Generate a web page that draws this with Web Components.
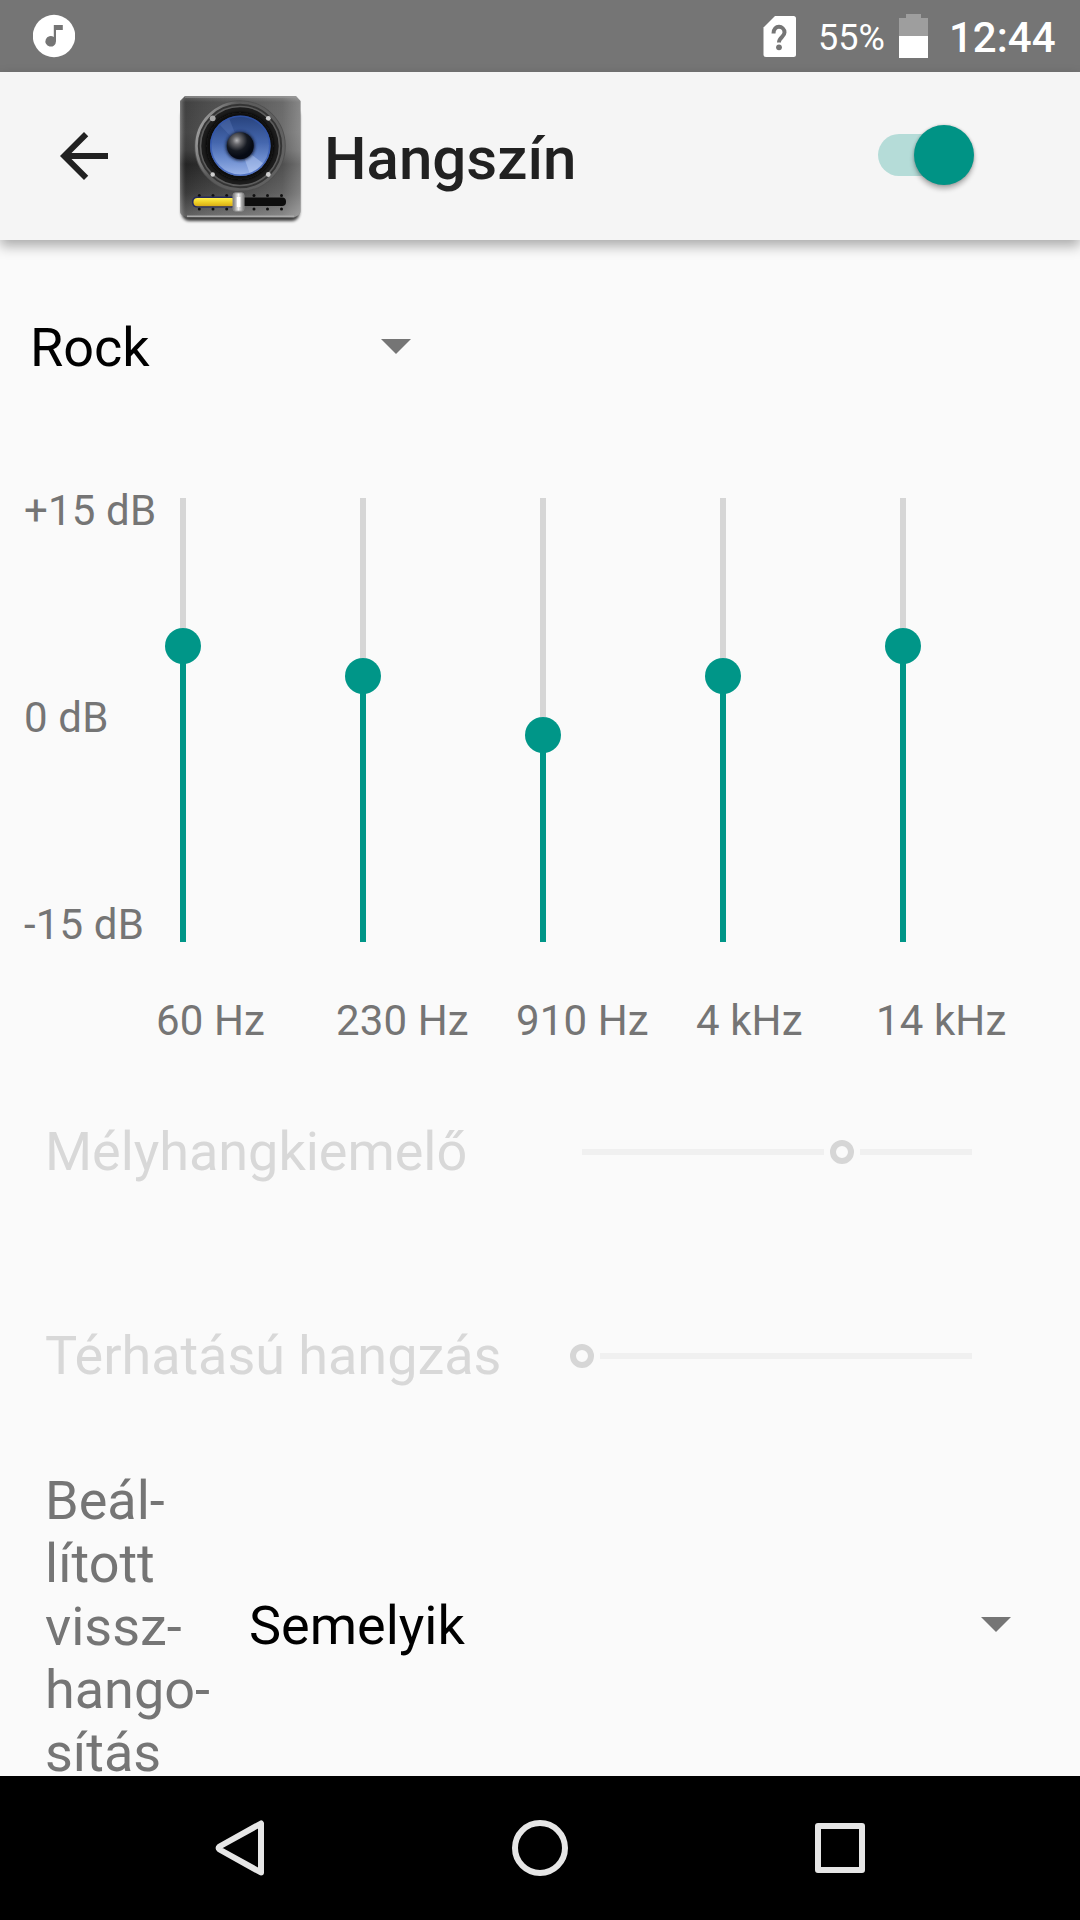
<!DOCTYPE html>
<html lang="hu">
<head>
<meta charset="utf-8">
<title>Hangszín</title>
<style>
  html, body { margin: 0; padding: 0; }
  body { width: 1080px; height: 1920px; overflow: hidden; background: #fafafa; font-family: Roboto, "Noto Sans", sans-serif; }
</style>
</head>
<body>
<eq-screen></eq-screen>

<script>
function define(name, html, setup) {
  const template = document.createElement('template');
  template.innerHTML = html;
  customElements.define(name, class extends HTMLElement {
    constructor() {
      super();
      this.attachShadow({ mode: 'open' }).appendChild(template.content.cloneNode(true));
    }
    connectedCallback() { if (setup) setup(this, this.shadowRoot); }
  });
}

define('status-bar', `
<style>
  :host { display: flex; align-items: flex-start; height: 72px; background: #757575; color: #fff; box-sizing: border-box; padding-left: 33px; padding-right: 24px; }
  svg { display: block; flex: none; }
  .space { flex: 1; }
  .pct { font-size: 36px; line-height: 42px; margin: 17px 14px 0 21px; width: 67px; }
  .time { font-size: 42px; line-height: 49px; font-weight: 500; margin: 13px 0 0 21px; width: 107px; white-space: nowrap; }
</style>
<svg width="42" height="72" viewBox="33 0 42 72">
  <circle cx="54" cy="36" r="21.2" fill="#fff"/>
  <path fill="#757575" d="M53.8 25H62.8V30H56V41.3A5.3 5.3 0 1 1 53.8 37Z"/>
</svg>
<div class="space"></div>
<svg width="34" height="72" viewBox="763 0 34 72">
  <path fill="#fff" d="M775 16H793.5Q796 16 796 18.500V54.500Q796 57 793.500 57H766Q763.500 57 763.500 54.500V27.500Z"/>
  <path fill="none" stroke="#757575" stroke-width="4" stroke-linecap="butt" d="M773.500 33.500C773.500 24 784.500 25.500 784.500 32.500C784.500 37 779 37 779 42.500"/>
  <circle cx="779" cy="47.300" r="2.900" fill="#757575"/>
</svg>
<div class="pct">55%</div>
<svg width="29" height="72" viewBox="899 0 29 72">
  <path fill="#9e9e9e" d="M906 14H921V18H928V36H899V18H906Z"/>
  <path fill="#fff" d="M899 36H928V58H899Z"/>
</svg>
<div class="time">12:44</div>
`);

define('speaker-icon', `
<style>:host { display: block; width: 130px; height: 136px; } svg { display: block; }</style>
<svg width="130" height="136" viewBox="175 92 130 136">
  <defs>
    <linearGradient id="body" x1="0" y1="0" x2="0" y2="1">
      <stop offset="0" stop-color="#707070"/><stop offset=".05" stop-color="#4a4a4a"/><stop offset=".3" stop-color="#4f4f4f"/>
      <stop offset=".45" stop-color="#454545"/><stop offset=".56" stop-color="#292929"/><stop offset=".8" stop-color="#424242"/><stop offset="1" stop-color="#707070"/>
    </linearGradient>
    <linearGradient id="sheen" x1="0" y1="0" x2="1" y2="0">
      <stop offset="0" stop-color="#fff" stop-opacity=".28"/><stop offset=".05" stop-color="#000" stop-opacity=".12"/>
      <stop offset=".5" stop-color="#fff" stop-opacity=".06"/><stop offset=".85" stop-color="#fff" stop-opacity=".18"/><stop offset="1" stop-color="#fff" stop-opacity=".34"/>
    </linearGradient>
    <linearGradient id="ring" x1="0" y1=".3" x2="1" y2=".7">
      <stop offset="0" stop-color="#a0a0a0"/><stop offset=".3" stop-color="#5a5a5a"/><stop offset="1" stop-color="#626262"/>
    </linearGradient>
    <linearGradient id="cone" x1="0" y1="0" x2="0" y2="1">
      <stop offset="0" stop-color="#27427c"/><stop offset=".45" stop-color="#4567ae"/><stop offset=".75" stop-color="#7191d2"/><stop offset="1" stop-color="#9db6ea"/>
    </linearGradient>
    <radialGradient id="cap" cx=".37" cy=".3" r=".6">
      <stop offset="0" stop-color="#b5b5b8"/><stop offset=".25" stop-color="#68686c"/><stop offset=".65" stop-color="#161a22"/><stop offset="1" stop-color="#060a14"/>
    </radialGradient>
    <linearGradient id="fill" x1="0" y1="0" x2="0" y2="1">
      <stop offset="0" stop-color="#fff04e"/><stop offset=".5" stop-color="#efd026"/><stop offset="1" stop-color="#d8aa16"/>
    </linearGradient>
    <linearGradient id="knob" x1="0" y1="0" x2="1" y2="0">
      <stop offset="0" stop-color="#777"/><stop offset=".5" stop-color="#f0f0f0"/><stop offset="1" stop-color="#777"/>
    </linearGradient>
    <filter id="soft" x="-10%" y="-10%" width="120%" height="120%"><feGaussianBlur stdDeviation="1.6"/></filter>
    <filter id="soft2" x="-20%" y="-20%" width="140%" height="140%"><feGaussianBlur stdDeviation="1.500"/></filter>
  </defs>
  <rect x="181.500" y="108" width="118" height="113" rx="8" fill="#000" opacity=".75" filter="url(#soft)"/>
  <path d="M185 96H296L300.500 101V211Q300.500 214 297 216L294 217.500H187L183 215.500Q180 214 180 211V101Z" fill="url(#body)"/>
  <path d="M185 96H296L300.500 101V211Q300.500 214 297 216L294 217.500H187L183 215.500Q180 214 180 211V101Z" fill="url(#sheen)"/>
  <path d="M185 97H296" stroke="#999" stroke-width="1.400" opacity=".8"/>
  <path d="M187 216.300H294" stroke="#aaa" stroke-width="1.500"/>
  <circle cx="240" cy="146" r="45" fill="#343434" stroke="#505050" stroke-width="1.500"/>
  <circle cx="240" cy="146" r="43.500" fill="none" stroke="url(#ring)" stroke-width="2.600"/>
  <circle cx="240" cy="146" r="39.500" fill="#1c1c1c" stroke="#5c5c5c" stroke-width="1.600"/>
  <circle cx="240" cy="146" r="34" fill="#080808" filter="url(#soft2)"/>
  <circle cx="240.300" cy="145.700" r="30.300" fill="url(#cone)"/>
  <path d="M240 146L219 124A30 30 0 0 1 229 118Z" fill="#6a8ac8" opacity=".28"/>
  <path d="M240 146L250 174A30 30 0 0 0 264 164Z" fill="#d5e2ff" opacity=".35"/>
  <circle cx="240.300" cy="145.700" r="29.500" fill="none" stroke="#3155b0" stroke-width="1.600" opacity=".7"/>
  <circle cx="240.300" cy="146" r="14.600" fill="#16213f" filter="url(#soft2)"/>
  <circle cx="240.300" cy="145.800" r="13.500" fill="url(#cap)"/>
  <g fill="#cfcfcf"><circle cx="212.700" cy="118.300" r="2.900" fill="#a8a8a8"/><circle cx="268.300" cy="118.300" r="2.400"/><circle cx="212.700" cy="174.500" r="2.200"/><circle cx="268.300" cy="174.500" r="2.400"/></g>
  <g fill="#101010">
    <circle cx="199.300" cy="195.500" r="1.500"/><circle cx="213" cy="195.500" r="1.500"/><circle cx="226.700" cy="195.500" r="1.500"/><circle cx="254" cy="195.500" r="1.500"/><circle cx="267.500" cy="195.500" r="1.500"/><circle cx="281.500" cy="195.500" r="1.500"/>
    <circle cx="199.300" cy="209" r="1.500"/><circle cx="213" cy="209" r="1.500"/><circle cx="226.700" cy="209" r="1.500"/><circle cx="254" cy="209" r="1.500"/><circle cx="267.500" cy="209" r="1.500"/><circle cx="281.500" cy="209" r="1.500"/>
  </g>
  <rect x="192" y="196.600" width="46" height="11" rx="5" fill="#252a5c"/>
  <rect x="236" y="197.500" width="50" height="8.500" rx="4" fill="#0e0e0e"/>
  <rect x="193.500" y="198" width="42" height="8.300" rx="4" fill="url(#fill)"/>
  <rect x="233" y="192.800" width="11" height="18.400" rx="2.500" fill="url(#knob)" stroke="#8b8b8b" stroke-width="1"/>
  <rect x="236.800" y="197" width="3.600" height="10" fill="#fff"/>
</svg>
`);

define('toggle-switch', `
<style>
  :host { display: block; width: 96px; height: 61px; }
  .track { width: 84px; height: 42px; margin-top: 9px; border-radius: 21px; background: #b5dcd8; display: flex; align-items: center; }
  .thumb { flex: none; width: 60px; height: 60px; border-radius: 50%; margin-left: 35.500px; background: #009385; box-shadow: 0 4px 5px rgba(0,0,0,.28), 0 0 3px rgba(0,0,0,.2); }
</style>
<div class="track"><div class="thumb"></div></div>
`);

define('app-bar', `
<style>
  :host { display: flex; align-items: flex-start; height: 168px; background: #f5f5f5; position: relative; z-index: 1; box-shadow: 0 6px 12px rgba(0,0,0,.32); color: #212121; }
  .back { display: block; flex: none; margin: 48px 0 0 48px; }
  speaker-icon { flex: none; margin: 20px 0 0 55px; }
  .title { flex: 1; margin: 52px 0 0 19px; font-size: 60px; line-height: 70px; font-weight: 500; }
  toggle-switch { flex: none; margin: 53px 106px 0 0; }
</style>
<svg class="back" width="72" height="72" viewBox="0 0 24 24" fill="#212121"><path d="M20 11H7.830l5.590-5.590L12 4l-8 8 8 8 1.410-1.410L7.830 13H20v-2z"/></svg>
<speaker-icon></speaker-icon>
<div class="title"><slot></slot></div>
<toggle-switch></toggle-switch>
`);

define('drop-down', `
<style>
  :host { display: flex; align-items: center; justify-content: space-between; height: 63px; font-size: 54px; line-height: 63px; color: #000; }
  svg { display: block; margin-bottom: 2px; }
</style>
<slot></slot>
<svg width="30" height="15" viewBox="0 0 30 15"><path fill="#757575" d="M0 0H30L15 15Z"/></svg>
`);

define('band-slider', `
<style>
  :host { display: flex; flex-direction: column; width: 180px; }
  .bar { display: flex; flex-direction: column; align-items: center; width: 54px; height: 444px; }
  .rest { width: 6px; flex: none; background: #d6d6d6; }
  .thumb { width: 36px; height: 36px; flex: none; margin: 0 0 -1px; border-radius: 50%; background: #009688; }
  .level { width: 6px; flex: 1; background: #009688; }
  .label { margin-top: 54px; font-size: 42px; line-height: 49px; letter-spacing: .1px; color: #757575; white-space: nowrap; }
</style>
<div class="bar"><div class="rest"></div><div class="thumb"></div><div class="level"></div></div>
<div class="label"><slot></slot></div>
`, (host, root) => {
  root.querySelector('.rest').style.height = (Number(host.getAttribute('drop')) - 18) + 'px';
});

define('equalizer-panel', `
<style>
  :host { display: flex; align-items: flex-start; padding-left: 24px; }
  .scale { display: flex; flex-direction: column; justify-content: space-between; width: 132px; height: 463px; font-size: 42px; line-height: 49px; letter-spacing: .15px; color: #757575; white-space: nowrap; }
  .bands { display: flex; margin-top: 12px; }
</style>
<div class="scale"><div>+15 dB</div><div>0 dB</div><div>-15 dB</div></div>
<div class="bands"><slot></slot></div>
`);

define('seek-row', `
<style>
  :host { display: flex; align-items: center; height: 63px; padding: 0 108px 0 45px; font-size: 54px; line-height: 63px; letter-spacing: -.04px; color: #d8d8d8; }
  .label { flex: 1; white-space: nowrap; }
  .seek { flex: none; display: flex; align-items: center; width: 408px; height: 24px; }
  .line { height: 6px; background: #f0f0f0; }
  .after { flex: 1; }
  .thumb { flex: none; box-sizing: border-box; width: 24px; height: 24px; margin: 0 6px; border: 6px solid #d6d6d6; border-radius: 50%; }
</style>
<div class="label"><slot></slot></div>
<div class="seek"><div class="line before"></div><div class="thumb"></div><div class="line after"></div></div>
`, (host, root) => {
  const value = Number(host.getAttribute('value'));
  root.querySelector('.before').style.width = Math.max(0, value - 18) + 'px';
  root.querySelector('.seek').style.width = (value > 18 ? 390 : 408) + 'px';
});

define('reverb-row', `
<style>
  :host { display: flex; align-items: center; padding: 0 69px 0 45px; }
  .label { width: 204px; font-size: 54px; line-height: 63px; color: #757575; }
  drop-down { flex: 1; margin-bottom: 2px; }
</style>
<div class="label">Beál-<br>lított<br>vissz-<br>hango-<br>sítás</div>
<drop-down>Semelyik</drop-down>
`);

define('nav-bar', `
<style>
  :host { display: flex; justify-content: center; align-items: center; height: 144px; background: #000; gap: 200px; position: relative; z-index: 1; }
  svg { display: block; width: 100px; height: 100px; fill: none; stroke: #e6e6e6; stroke-width: 6; stroke-linejoin: round; }
</style>
<svg viewBox="190 1798 100 100"><path d="M261 1823.500V1872.500L219.500 1849.500Q218 1848 219.500 1846.500Z"/></svg>
<svg viewBox="490 1798 100 100"><circle cx="540" cy="1848" r="25"/></svg>
<svg viewBox="790 1798 100 100"><rect x="818" y="1826" width="44" height="44"/></svg>
`);

define('eq-screen', `
<style>
  :host { display: flex; flex-direction: column; width: 1080px; height: 1920px; background: #fafafa; }
  main { height: 1536px; }
  .preset { margin: 76px 0 0 30px; width: 381px; }
  equalizer-panel { margin-top: 107px; }
  .bass { margin-top: 75px; }
  .surround { margin-top: 141px; }
  reverb-row { margin-top: 82px; }
</style>
<status-bar></status-bar>
<app-bar>Hangszín</app-bar>
<main>
  <drop-down class="preset">Rock</drop-down>
  <equalizer-panel>
    <band-slider drop="148">60 Hz</band-slider>
    <band-slider drop="178">230 Hz</band-slider>
    <band-slider drop="237">910 Hz</band-slider>
    <band-slider drop="178">4 kHz</band-slider>
    <band-slider drop="148">14 kHz</band-slider>
  </equalizer-panel>
  <seek-row class="bass" value="260">Mélyhangkiemelő</seek-row>
  <seek-row class="surround" value="0">Térhatású hangzás</seek-row>
  <reverb-row></reverb-row>
</main>
<nav-bar></nav-bar>
`);
</script>
</body>
</html>
